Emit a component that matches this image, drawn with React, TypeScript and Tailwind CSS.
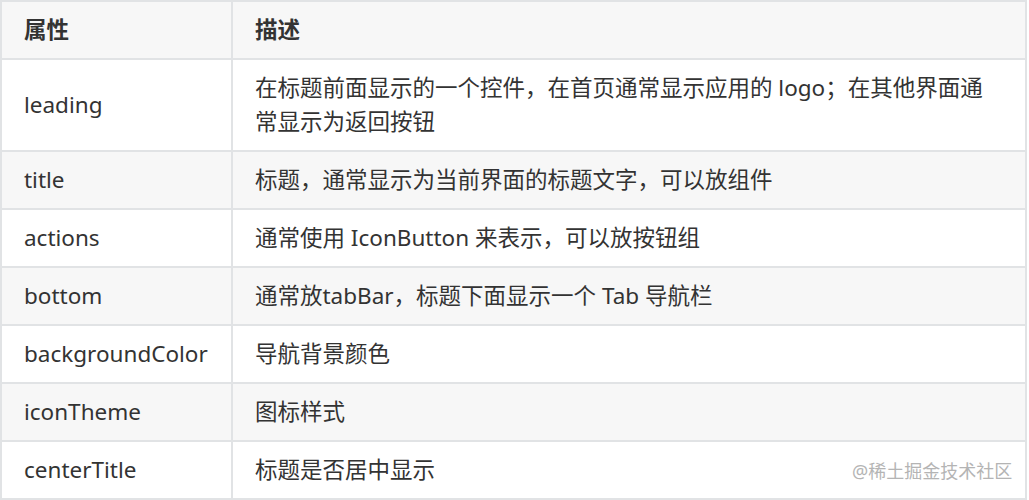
import React from "react";

const rows: [string, string][] = [
  ["leading", "在标题前面显示的一个控件，在首页通常显示应用的 logo；在其他界面通常显示为返回按钮"],
  ["title", "标题，通常显示为当前界面的标题文字，可以放组件"],
  ["actions", "通常使用 IconButton 来表示，可以放按钮组"],
  ["bottom", "通常放tabBar，标题下面显示一个 Tab 导航栏"],
  ["backgroundColor", "导航背景颜色"],
  ["iconTheme", "图标样式"],
  ["centerTitle", "标题是否居中显示"],
];

export default function App() {
  return (
    <div
      className="relative w-[1029px] h-[500px] bg-white overflow-hidden text-[#333333]"
      style={{ fontFamily: '"Noto Sans", "Noto Sans CJK SC", sans-serif' }}
    >
      <table className="border-collapse w-[1027px] text-[22.5px] leading-[34px]">
        <colgroup>
          <col className="w-[231px]" />
          <col />
        </colgroup>
        <thead>
          <tr className="bg-[#f7f7f7]">
            <th className="border-2 border-[#e1e3e5] text-left font-bold px-[22px] py-[11px]">属性</th>
            <th className="border-2 border-[#e1e3e5] text-left font-bold px-[22px] py-[11px]">描述</th>
          </tr>
        </thead>
        <tbody>
          {rows.map(([k, v], i) => (
            <tr key={k} className={i % 2 === 1 ? "bg-[#f7f7f7]" : "bg-white"}>
              <td className="border-2 border-[#e1e3e5] px-[22px] py-[11px] align-middle">{k}</td>
              <td className="border-2 border-[#e1e3e5] px-[22px] py-[11px] align-middle">{v}</td>
            </tr>
          ))}
        </tbody>
      </table>
      <div className="absolute left-[852px] top-[458px] text-[18px] leading-[26px] text-[#b4b4b4]">
        @稀土掘金技术社区
      </div>
    </div>
  );
}
